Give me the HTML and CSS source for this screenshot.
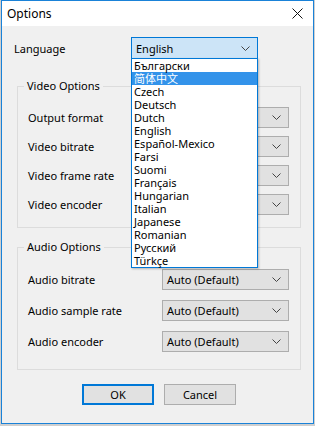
FILE: index.html
```html
<!DOCTYPE html>
<html lang="en">
<head>
    <meta charset="UTF-8">
    <meta name="viewport" content="width=device-width, initial-scale=1.0">
    <title>Options</title>
    <link rel="stylesheet" href="styles.css">
</head>
<body>

    <div class="window">
        <div class="titlebar">
            <span class="title">Options</span>
            <svg class="close" width="11" height="11" viewBox="0 0 11 11">
                <path d="M0.5 0.5 L10.5 10.5 M10.5 0.5 L0.5 10.5" stroke="#111" stroke-width="1" fill="none"/>
            </svg>
        </div>

        <div class="content">
            <div class="lang-row">
                <label class="label">Language</label>
                <div class="lang-box">
                    <div class="combo focused">
                        <span>English</span>
                        <svg class="chev" width="9" height="5" viewBox="0 0 9 5"><path d="M0.5 0.5 L4.5 4.5 L8.5 0.5" stroke="#444" fill="none"/></svg>
                    </div>
                    <ul class="droplist">
                        <li>Български</li>
                        <li class="selected">简体中文</li>
                        <li>Czech</li>
                        <li>Deutsch</li>
                        <li>Dutch</li>
                        <li>English</li>
                        <li>Español-Mexico</li>
                        <li>Farsi</li>
                        <li>Suomi</li>
                        <li>Français</li>
                        <li>Hungarian</li>
                        <li>Italian</li>
                        <li>Japanese</li>
                        <li>Romanian</li>
                        <li>Русский</li>
                        <li>Türkçe</li>
                    </ul>
                </div>
            </div>

            <!-- the video combos sit under the open language list -->
            <fieldset class="group video">
                <legend>Video Options</legend>
                <div class="row">
                    <label class="label">Output format</label>
                    <div class="combo"><span></span><svg class="chev" width="9" height="5" viewBox="0 0 9 5"><path d="M0.5 0.5 L4.5 4.5 L8.5 0.5" stroke="#444" fill="none"/></svg></div>
                </div>
                <div class="row">
                    <label class="label">Video bitrate</label>
                    <div class="combo"><span></span><svg class="chev" width="9" height="5" viewBox="0 0 9 5"><path d="M0.5 0.5 L4.5 4.5 L8.5 0.5" stroke="#444" fill="none"/></svg></div>
                </div>
                <div class="row">
                    <label class="label">Video frame rate</label>
                    <div class="combo"><span></span><svg class="chev" width="9" height="5" viewBox="0 0 9 5"><path d="M0.5 0.5 L4.5 4.5 L8.5 0.5" stroke="#444" fill="none"/></svg></div>
                </div>
                <div class="row">
                    <label class="label">Video encoder</label>
                    <div class="combo"><span></span><svg class="chev" width="9" height="5" viewBox="0 0 9 5"><path d="M0.5 0.5 L4.5 4.5 L8.5 0.5" stroke="#444" fill="none"/></svg></div>
                </div>
            </fieldset>

            <fieldset class="group audio">
                <legend>Audio Options</legend>
                <div class="row">
                    <label class="label">Audio bitrate</label>
                    <div class="combo"><span>Auto (Default)</span><svg class="chev" width="9" height="5" viewBox="0 0 9 5"><path d="M0.5 0.5 L4.5 4.5 L8.5 0.5" stroke="#444" fill="none"/></svg></div>
                </div>
                <div class="row">
                    <label class="label">Audio sample rate</label>
                    <div class="combo"><span>Auto (Default)</span><svg class="chev" width="9" height="5" viewBox="0 0 9 5"><path d="M0.5 0.5 L4.5 4.5 L8.5 0.5" stroke="#444" fill="none"/></svg></div>
                </div>
                <div class="row">
                    <label class="label">Audio encoder</label>
                    <div class="combo"><span>Auto (Default)</span><svg class="chev" width="9" height="5" viewBox="0 0 9 5"><path d="M0.5 0.5 L4.5 4.5 L8.5 0.5" stroke="#444" fill="none"/></svg></div>
                </div>
            </fieldset>

            <div class="buttons">
                <button class="btn default">OK</button>
                <button class="btn">Cancel</button>
            </div>
        </div>
    </div>

</body>
</html>
```

FILE: styles.css
```css
body {
    margin: 0;
    padding: 0;
    background-color: #cfcfcf;
    font-family: "Noto Sans", "Noto Sans CJK SC", sans-serif;
    font-size: 11px;
    color: #000;
}

.window {
    box-sizing: border-box;
    width: 313px;
    height: 424px;
    margin-left: 1px;
    border: 1px solid #1a82d8;
    background-color: #f0f0f0;
    display: flex;
    flex-direction: column;
}

.titlebar {
    height: 25px;
    background-color: #fff;
    display: flex;
    align-items: center;
    justify-content: space-between;
    padding: 0 10px 0 5px;
    flex-shrink: 0;
}

.title {
    font-size: 12px;
}

.content {
    flex: 1;
    padding: 11px 12px 0 12px;
}

.lang-row {
    display: flex;
    align-items: center;
    height: 22px;
}

.lang-row .label {
    width: 117px;
}

.lang-box {
    position: relative;
}

.combo {
    box-sizing: border-box;
    width: 127px;
    height: 21px;
    border: 1px solid #adadad;
    background-color: #e1e1e1;
    display: flex;
    align-items: center;
    justify-content: space-between;
    padding: 0 7px 0 4px;
}

.combo.focused {
    height: 22px;
    border-color: #0078d7;
    background-color: #cce4f7;
}

.droplist {
    position: absolute;
    top: 21px;
    left: 0;
    z-index: 2;
    box-sizing: border-box;
    width: 127px;
    margin: 0;
    padding: 0;
    list-style: none;
    background-color: #fff;
    border: 1px solid #0078d7;
    box-shadow: 1px 1px 2px rgba(0, 0, 0, 0.25);
}

.droplist li {
    height: 13px;
    line-height: 13px;
    padding-left: 2px;
    white-space: nowrap;
}

.droplist li.selected {
    background-color: #3393ea;
    color: #fff;
}

.group {
    margin: 19px 0 0 3px;
    width: 284px;
    box-sizing: border-box;
    border: 1px solid #dcdcdc;
    padding: 5px 11px 12px 10px;
}

.group legend {
    padding: 0 3px;
    margin-left: -4px;
    line-height: 16px;
}

.row {
    display: flex;
    align-items: center;
    justify-content: space-between;
    margin-top: 8px;
}

.audio {
    margin-top: 11px;
    padding-bottom: 17px;
}

.audio .row {
    margin-top: 10px;
}

.audio .row:first-of-type {
    margin-top: 9px;
}

.buttons {
    display: flex;
    gap: 10px;
    margin: 14px 0 0 68px;
}

.btn {
    box-sizing: border-box;
    width: 72px;
    height: 21px;
    border: 1px solid #adadad;
    background-color: #e1e1e1;
    font-family: inherit;
    font-size: 11px;
    padding: 0;
}

.btn.default {
    border: 2px solid #0078d7;
}
```
